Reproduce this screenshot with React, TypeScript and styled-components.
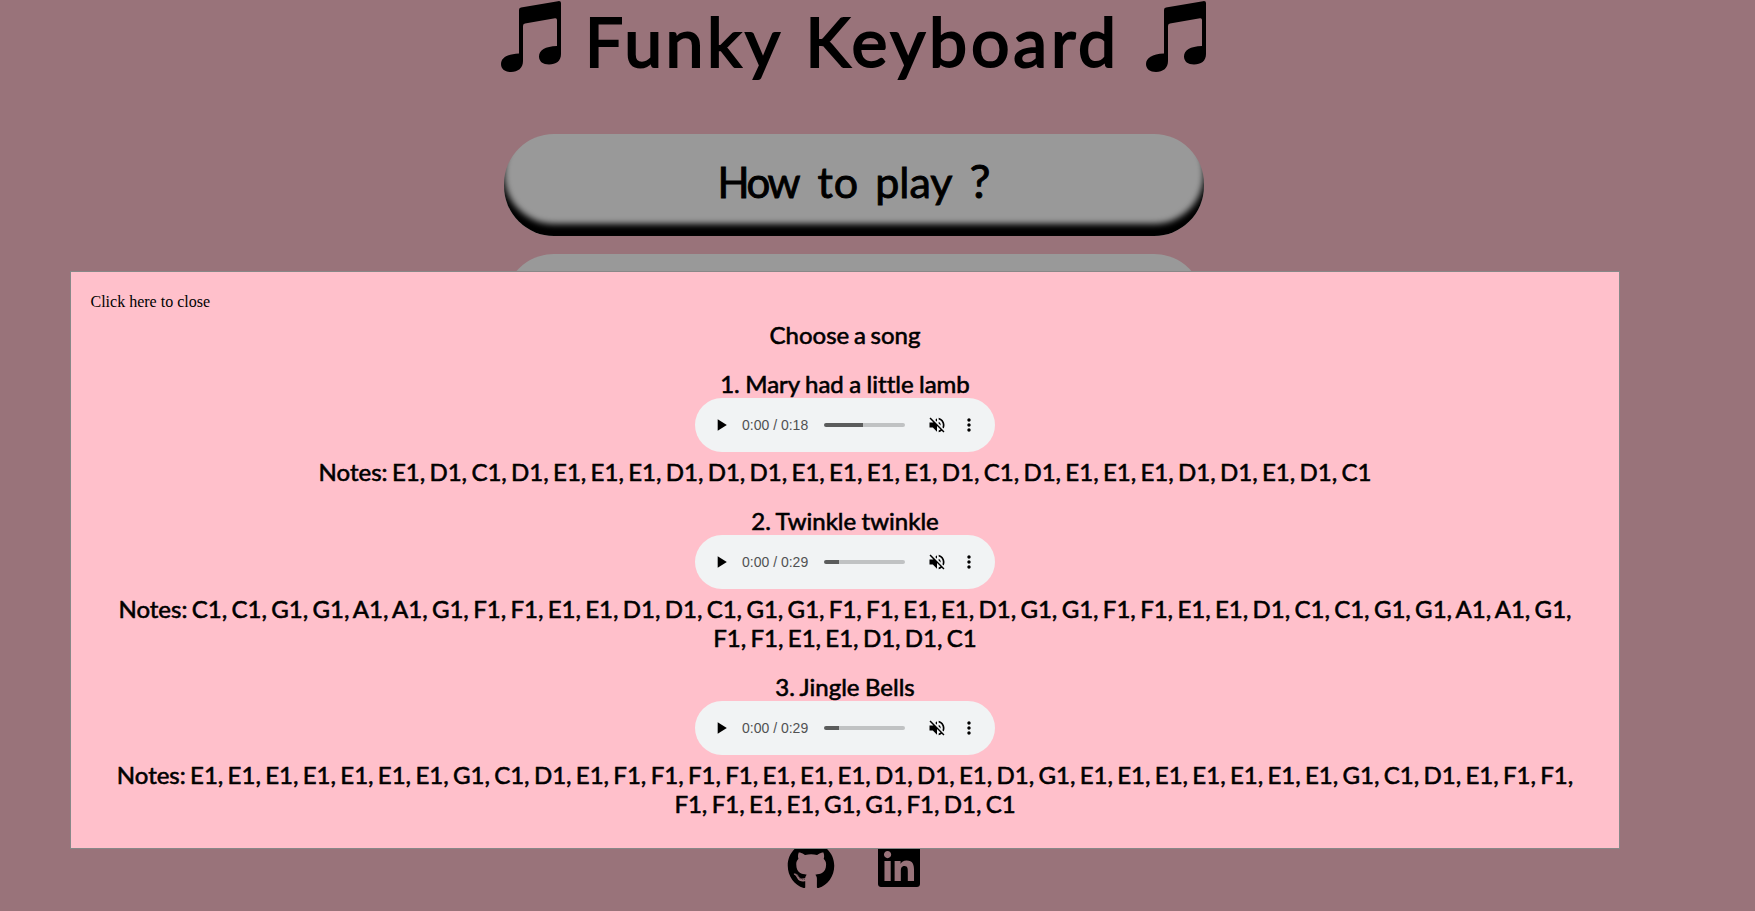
import React from 'react';
import styled, { createGlobalStyle } from 'styled-components';
import { FaGithub, FaLinkedin } from 'react-icons/fa';
import { MdPlayArrow, MdVolumeOff, MdMoreVert } from 'react-icons/md';

const GlobalStyle = createGlobalStyle`
  * { box-sizing: border-box; }
  html, body { margin: 0; height: 100%; overflow: hidden; background: pink; color: #000; }
`;

const Page = styled.main`
  height: 911px;
  padding-right: 47px;
  display: flex;
  flex-direction: column;
  align-items: center;
`;

const Title = styled.h1`
  margin: 0;
  height: 134px;
  width: 706px;
  display: flex;
  justify-content: space-between;
  align-items: flex-start;
  font: 400 68px/81px Lato, sans-serif;
`;

const TitleWords = styled.span`
  display: flex;
  gap: 25px;
  margin-right: 7px;
  -webkit-text-stroke: 2px #000;
`;

const Word = styled.span<{ $spacing?: number; $size?: number }>`
  letter-spacing: ${(p) => p.$spacing ?? 0}px;
  margin-right: ${(p) => -(p.$spacing ?? 0)}px;
  ${(p) => p.$size && `font-size: ${p.$size}px;`}
`;

const NoteSvg = styled.svg`
  width: 61px;
  height: 73px;
`;

const MenuButton = styled.button`
  flex: none;
  width: 700px;
  height: 102px;
  margin: 0 0 18px;
  padding: 0 0 9px;
  border: 0;
  border-radius: 50px;
  background: #fff;
  box-shadow: inset 0 -12px 6px #000;
  display: flex;
  justify-content: center;
  align-items: center;
  color: #000;
  font: 400 43px/52px Lato, sans-serif;
  -webkit-text-stroke: 0.9px #000;
`;

const Label = styled.span`
  display: flex;
  align-items: baseline;
  gap: 17px;
`;

const Social = styled.footer`
  display: flex;
  gap: 40px;
  margin-top: auto;
  padding: 0 0 21px 2px;
  font-size: 48px;
  svg { display: block; }
`;

const Overlay = styled.div`
  position: fixed;
  inset: 0;
  padding: 271px 0 0 70px;
  background: rgba(0, 0, 0, 0.4);
`;

const Modal = styled.section`
  width: 1550px;
  height: 578px;
  padding: 20px 19px;
  border: 1px solid #888;
  background: pink;
`;

const Close = styled.div`
  padding-left: 0.5px;
  font: 16px/19px 'Liberation Serif', serif;
`;

const Heading = styled.h2`
  margin: 0;
  font: 400 24px/29px Lato, sans-serif;
  font-variant-ligatures: none;
  text-align: center;
  word-spacing: -0.7px;
  -webkit-text-stroke: 0.6px #000;
`;

const Notes = styled(Heading)`
  padding: 0 20px;
  word-spacing: -1.82px;
`;

const ModalTitle = styled(Heading)`
  margin: 9px 0 20px;
  word-spacing: -1.4px;
`;

const Song = styled.article`
  margin-bottom: 20px;
`;

const Player = styled.div`
  width: 300px;
  height: 54px;
  margin: 0 auto 5px;
  padding: 0 16px;
  border-radius: 27px;
  background: #f1f3f4;
  display: flex;
  align-items: center;
  svg { flex: none; width: 20px; height: 20px; }
`;

const Time = styled.span`
  width: 67px;
  margin: 0 15px 0 11px;
  white-space: nowrap;
  color: #505152;
  font: 14px/20px 'Liberation Sans', sans-serif;
`;

const Track = styled.div<{ $loaded: number }>`
  width: 81px;
  height: 4px;
  margin-right: 22px;
  border-radius: 2px;
  background: linear-gradient(to right, #5b5c5c ${(p) => p.$loaded}px, #c0c2c3 ${(p) => p.$loaded}px);
`;

const More = styled(MdMoreVert)`
  margin-left: 12px;
`;

const songs = [
  {
    title: '1. Mary had a little lamb', time: '0:18', loaded: 39,
    notes: 'E1, D1, C1, D1, E1, E1, E1, D1, D1, D1, E1, E1, E1, E1, D1, C1, D1, E1, E1, E1, D1, D1, E1, D1, C1',
  },
  {
    title: '2. Twinkle twinkle', time: '0:29', loaded: 15,
    notes: 'C1, C1, G1, G1, A1, A1, G1, F1, F1, E1, E1, D1, D1, C1, G1, G1, F1, F1, E1, E1, D1, G1, G1, F1, F1, E1, E1, D1, C1, C1, G1, G1, A1, A1, G1, F1, F1, E1, E1, D1, D1, C1',
  },
  {
    title: '3. Jingle Bells', time: '0:29', loaded: 15,
    notes: 'E1, E1, E1, E1, E1, E1, E1, G1, C1, D1, E1, F1, F1, F1, F1, E1, E1, E1, D1, D1, E1, D1, G1, E1, E1, E1, E1, E1, E1, E1, G1, C1, D1, E1, F1, F1, F1, F1, E1, E1, G1, G1, F1, D1, C1',
  },
];

const BeamedNote = () => (
  <NoteSvg viewBox="0 0 61 73">
    <path d="M18 10Q18 8 20 7.600L57 1.200Q60 .7 60 3V54C60 61 55 64.500 48 64.500C42 64.500 38 61.500 38 56.500C38 50 44 46.500 56 46V20Q56 18 54 18.300L24 23.400Q22 23.800 22 26V61C22 68 17 72 10 72C4 72 0 69 0 64C0 58 6 54 18 53.500Z" />
  </NoteSvg>
);

export default function App() {
  return (
    <>
      <GlobalStyle />
      <Page>
        <Title>
          <BeamedNote />
          <TitleWords>
            <Word $spacing={3.5}>Funky</Word>
            <Word $spacing={3.8}>Keyboard</Word>
          </TitleWords>
          <BeamedNote />
        </Title>
        <MenuButton>
          <Label>
            <Word $spacing={-2.5} $size={42}>How</Word>
            <Word $spacing={1}>to</Word>
            <Word>play</Word>
            <Word $size={47}>?</Word>
          </Label>
        </MenuButton>
        <MenuButton />
        <Social>
          <FaGithub />
          <FaLinkedin />
        </Social>
      </Page>
      <Overlay>
        <Modal>
          <Close>Click here to close</Close>
          <ModalTitle>Choose a song</ModalTitle>
          {songs.map((song) => (
            <Song key={song.title}>
              <Heading>{song.title}</Heading>
              <Player>
                <MdPlayArrow />
                <Time>0:00 / {song.time}</Time>
                <Track $loaded={song.loaded} />
                <MdVolumeOff />
                <More />
              </Player>
              <Notes>Notes: {song.notes}</Notes>
            </Song>
          ))}
        </Modal>
      </Overlay>
    </>
  );
}
